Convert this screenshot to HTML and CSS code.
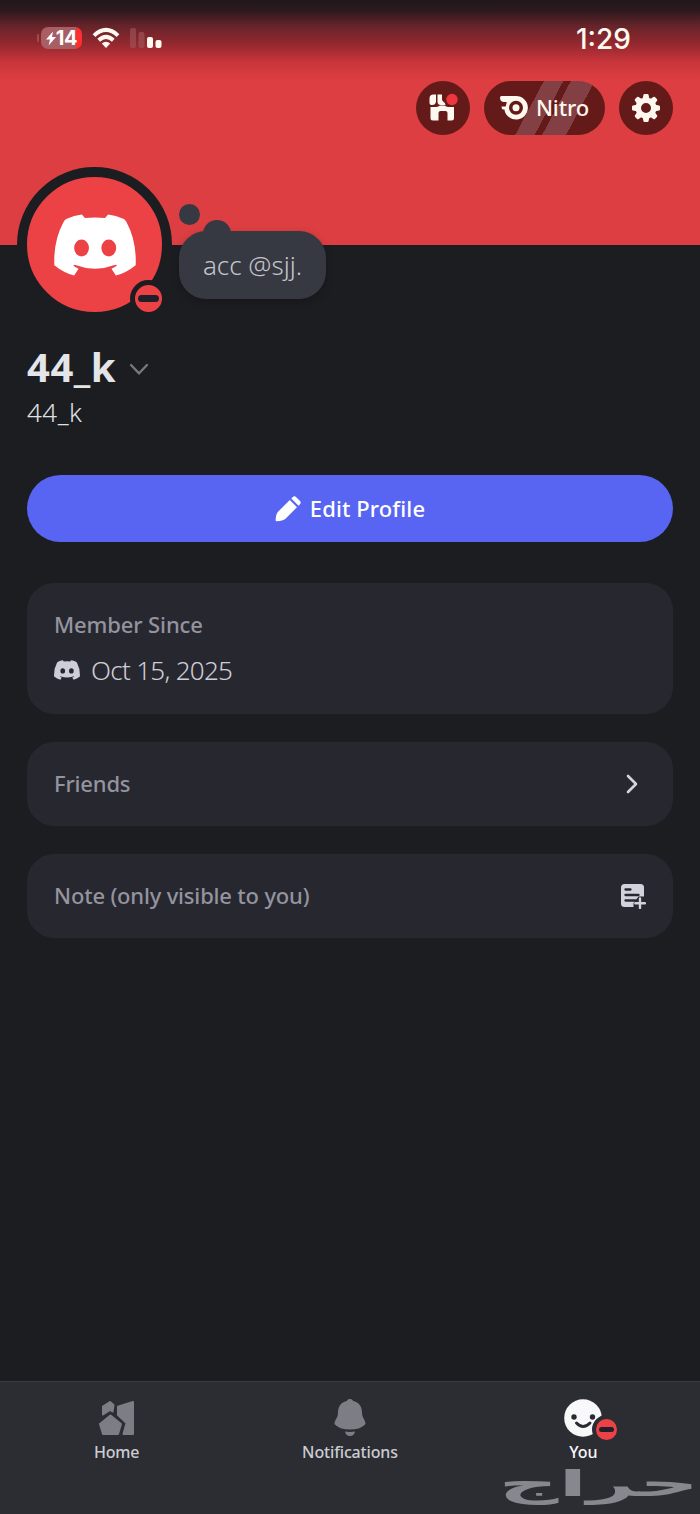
FILE: index.html
```html
<!DOCTYPE html>
<html lang="en">
<head>
<meta charset="utf-8">
<title>Profile</title>
<link rel="stylesheet" href="styles.css">
</head>
<body>
<svg class="defs" width="0" height="0" aria-hidden="true">
  <symbol id="discord" viewBox="0 0 244 184"><path fill="currentColor" fill-rule="evenodd" d="M83 1Q60 4 38 14 32 17 28 24-2 80 1 152 28 174 60 183L73 163Q64 159 57 152 62 150 66 152 122 173 178 152 184 150 188 152 180 159 171 163L184 183Q216 174 243 152 246 80 216 24 212 17 206 14 184 4 161 1L152 12Q122 9 92 12ZM82 76a22 25 0 1 1 0 50 22 25 0 0 1 0-50ZM163 76a22 25 0 1 1 0 50 22 25 0 0 1 0-50Z"/></symbol>
</svg>
<main class="screen">
  <header class="banner">
    <div class="status">
      <div class="signals">
        <span class="battery"><svg width="10" height="15" viewBox="0 0 10 14"><path fill="#fff" d="M7 0 0 8h4L2.6 14 10 5.6H6z"/></svg>14</span>
        <svg class="wifi" width="28" height="22" viewBox="0 0 28 22"><g fill="none" stroke="#fffaf0" stroke-width="4"><path d="M2 8.6Q14-2.8 26 8.6"/><path d="M6.7 13.3q7.3-6.7 14.6 0"/></g><path fill="#fffaf0" d="M9.8 16.400q4.200-3.400 8.400 0L14 21z"/></svg>
        <svg width="32" height="21" viewBox="0 0 32 21"><rect width="6" height="20" rx="2" fill="#a05357" opacity=".65"/><rect x="8.500" y="4" width="6" height="16" rx="2" fill="#a05357" opacity=".7"/><rect x="17" y="9" width="6" height="11" rx="2" fill="#fffaf0"/><rect x="25.500" y="12" width="6" height="8" rx="2" fill="#fffaf0"/></svg>
      </div>
      <time class="clock">1:29</time>
    </div>
    <nav class="actions">
      <button class="pill round" aria-label="Shop"><svg width="30" height="30" viewBox="0 0 30 30"><path fill="#fff8ee" d="M5.500 1.500H8V8.500a4 4 0 0 1-4 3.500H3a2 2 0 0 1-1.500-2V5.500a4 4 0 0 1 4-4ZM9.500 1.500H14V6c0 3 3.500 3 3.500 6H13a3.500 3.500 0 0 1-3.500-3.500ZM2.500 14H8c2.500 0 3-1.500 4.500-1.500H16c1.500 0 2 1.500 4.500 1.500H26V25a2.500 2.500 0 0 1-2.500 2.500H19.500V20a2 2 0 0 0-2-2h-5a2 2 0 0 0-2 2v7.500H5A2.500 2.500 0 0 1 2.500 25Z"/><circle cx="24" cy="6.500" r="5.700" fill="#ee363f"/></svg></button>
      <button class="pill nitro"><svg class="nitro-icon" width="28" height="24" viewBox="0 0 28 24"><path fill="#fff8ee" fill-rule="evenodd" d="M1.500 0H16a11.800 11.800 0 1 1-11.600 13.500H3.200Q1.500 13.200 1.500 10.500h4.200L6.800 6H3.500Q0 5.600 0 1.500 0 0 1.500 0ZM16 4.700a7 7 0 1 0 0 14 7 7 0 0 0 0-14Zm0 3.500a3.500 3.500 0 1 1 0 7 3.500 3.500 0 0 1 0-7Z"/></svg><span>Nitro</span></button>
      <button class="pill round" aria-label="Settings"><svg width="30" height="30" viewBox="-15 -15 30 30"><g fill="#fff8ee"><path fill-rule="evenodd" d="M0-10.500a10.500 10.500 0 1 1 0 21 10.500 10.500 0 0 1 0-21ZM0-5a5 5 0 1 0 0 10A5 5 0 0 0 0-5Z"/><g id="teeth"><path id="tooth" d="M-3.300-9.500-2.600-13Q-2.400-14-1.400-14h2.800Q2.400-14 2.600-13L3.300-9.500Z"/><use href="#tooth" transform="rotate(45)"/><use href="#tooth" transform="rotate(90)"/><use href="#tooth" transform="rotate(135)"/></g><use href="#teeth" transform="rotate(180)"/></g></svg></button>
    </nav>
  </header>
  <section class="identity">
    <div class="avatar"><svg width="82" height="62"><use href="#discord"/></svg><span class="dnd"></span></div>
    <div class="bubble"><i class="dot small"></i><i class="dot large"></i><span>acc @sjj.</span></div>
  </section>
  <section class="content">
    <h1 class="name"><span>44_k</span><svg width="20" height="13" viewBox="0 0 20 13"><path d="m2 2 8 8.300L18 2" fill="none" stroke="#777980" stroke-width="2.300" stroke-linecap="round"/></svg></h1>
    <p class="handle">44_k</p>
    <button class="edit"><svg width="26" height="26" viewBox="0 0 26 26"><path fill="#fff" d="m14.800 4 7.200 7.200L10.500 22.700Q8 25 1.500 25.200.600 25.200.600 24.300.700 18 3.300 15.500ZM16.300 2.500 17.600 1.200q1.800-1.800 3.600 0l3.600 3.600q1.800 1.800 0 3.600l-1.300 1.300Z"/></svg><span>Edit Profile</span></button>
    <article class="card since"><h2 class="label">Member Since</h2><p class="date"><svg width="26" height="20"><use href="#discord"/></svg><span>Oct 15, 2025</span></p></article>
    <article class="card row"><h2 class="label friends">Friends</h2><svg class="chevron" width="13" height="20" viewBox="0 0 13 20"><path d="m2 2 8 8-8 8" fill="none" stroke="#d5d4dd" stroke-width="2.600" stroke-linecap="round" stroke-linejoin="round"/></svg></article>
    <article class="card row"><h2 class="label note">Note (only visible to you)</h2><svg width="26" height="26" viewBox="0 0 26 26"><rect x="1" y="1" width="23" height="23" rx="3.500" fill="#d3d1db"/><path d="M24.500 13.500v12.500H13.500V20l5-6.500Z" fill="#272730"/><path d="M5.500 6.500h5M5.500 12h13M5.500 17.500h10" stroke="#272730" stroke-width="2.300" stroke-linecap="round"/><path d="M20 15.500v9.500M15.300 20.300H25" stroke="#d3d1db" stroke-width="2.400" stroke-linecap="round"/></svg></article>
  </section>
  <footer class="tabs">
    <a class="tab"><svg width="38" height="38" viewBox="0 0 38 38"><g fill="#7d7d86" stroke="#7d7d86" stroke-width="2" stroke-linejoin="round"><path d="M5 7.500 12 3l3.500 3-1 6.500L12 11 5 15.500ZM20 7.800 35 3v32H25.500L28.500 24 20 16ZM12.500 16.500 23 25 20 35H5L2 25Z"/></g></svg><span>Home</span></a>
    <a class="tab notifications"><svg width="38" height="38" viewBox="0 0 38 38"><path fill="#7d7d86" d="M19 0q2.500 0 3.200 2C29 3.300 31 9 31 13.500c0 6 3.500 7 3.500 11.500Q30 30.500 19 30.500T3.500 25C3.500 20.500 7 19.500 7 13.500 7 9 9 3.300 15.800 2 16.500 0 19 0 19 0ZM14 32.500q5 .8 10 0-1 4.500-5 4.500t-5-4.500Z"/></svg><span>Notifications</span></a>
    <a class="tab you"><span class="face"><svg width="38" height="38" viewBox="0 0 38 38"><circle cx="19" cy="19" r="18.800" fill="#f8f8fb"/><g fill="#2a2b31"><circle cx="10" cy="18" r="2.700"/><circle cx="28.500" cy="18" r="2.700"/></g><path d="M12.500 24q6.500 7 13.500 0" fill="none" stroke="#2a2b31" stroke-width="3" stroke-linecap="round"/></svg><i class="dnd mini"></i></span><span>You</span></a>
    <div class="watermark" lang="ar" dir="rtl"><span>حراج</span></div>
  </footer>
</main>
</body>
</html>
```
FILE: styles.css
```css
* { box-sizing: border-box; }
body { margin: 0; background: #1c1d21; font-family: "Noto Sans", "Open Sans", sans-serif; }
h1, h2, p { margin: 0; }
button { border: 0; padding: 0; font: inherit; color: inherit; }
svg { display: block; flex: none; }
.defs { position: absolute; }
.screen { width: 700px; height: 1514px; display: flex; flex-direction: column; overflow: hidden; background: #1c1d21; }

.banner { height: 245px; flex: none; background: linear-gradient(#1f181c 0, #2b191d 10px, #65242a 26px, #96292f 45px, #c8353b 62px, #dc3e41 80px); }
.status { height: 76px; display: flex; justify-content: space-between; padding: 0 69px 0 41px; align-items: center; }
.signals { display: flex; align-items: center; gap: 10px; }
.battery { position: relative; width: 41px; height: 22px; border-radius: 7px; display: flex; align-items: center; justify-content: center; color: #fff; font: 700 20px/22px "Inter", sans-serif; letter-spacing: -.3px; background: linear-gradient(90deg, #a85e62 0 35px, #fc3030 35px); }
.battery::before { content: ""; position: absolute; left: -4px; top: 7px; width: 2px; height: 8px; border-radius: 2px; background: #a4484d; }
.clock { color: #fffaf0; font: 500 28px/32px "Inter", sans-serif; padding-top: 2px; }
.actions { display: flex; justify-content: flex-end; gap: 14px; padding: 5px 27px 0 0; }
.pill { height: 54px; border-radius: 27px; background: #651a1a; display: flex; align-items: center; justify-content: center; color: #fff8ee; }
.round { width: 54px; }
.nitro { width: 121px; gap: 8px; font-size: 22px; font-weight: 500; background: linear-gradient(118deg, transparent 0 40%, #824044 40% 53%, transparent 53% 58%, #824044 58% 74%, transparent 74%), #651a1a; }
.nitro span { margin-top: -2px; letter-spacing: -.1px; }

.identity { display: flex; align-items: flex-start; gap: 7px; margin: -78px 0 0 17px; height: 156px; flex: none; }
.avatar { position: relative; width: 155px; height: 155px; border: 10px solid #1c1d21; border-radius: 50%; background: #ed4245; display: flex; align-items: center; justify-content: center; color: #fff; }
.dnd { position: absolute; right: -5px; bottom: -5px; width: 37px; height: 37px; border: 5px solid #1c1d21; border-radius: 50%; background: #ed4245; }
.dnd::after { content: ""; position: absolute; left: 3px; right: 3px; top: 50%; height: 7px; margin-top: -3.5px; border-radius: 4px; background: #20202a; }
.bubble { position: relative; margin-top: 64px; width: 147px; height: 68px; border-radius: 27px; background: #363941; color: #c3c5cc; display: flex; align-items: center; justify-content: center; font-size: 26px; font-weight: 350; box-shadow: 0 3px 8px #0003; }
.bubble span { margin-top: -1px; }
.dot { position: absolute; border-radius: 50%; background: #363941; }
.small { left: 0; top: -27px; width: 21px; height: 21px; }
.large { left: 24px; top: -11px; width: 28px; height: 28px; }

.content { flex: 1; padding: 16px 27px 0; }
.name { display: flex; align-items: center; gap: 13px; height: 54px; color: #e4e5e9; font-size: 40px; font-weight: 700; letter-spacing: .5px; }
.name svg { margin-top: 6px; }
.handle { height: 38px; line-height: 39px; color: #dfe0e4; font-size: 26px; font-weight: 350; letter-spacing: .5px; }
.edit { width: 100%; height: 67px; margin-top: 44px; border-radius: 34px; background: #5865f2; color: #fff; display: flex; align-items: center; justify-content: center; gap: 9px; font-size: 22px; font-weight: 550; }
.edit span { margin-top: -2px; letter-spacing: .1px; }
.card { background: #272730; border-radius: 27px; }
.since { height: 131px; margin-top: 41px; padding: 25px 27px; display: flex; flex-direction: column; gap: 13px; }
.row { height: 84px; margin-top: 28px; padding: 0 27px; display: flex; align-items: center; justify-content: space-between; }
.label { color: #93949e; font-size: 22px; line-height: 32px; font-weight: 500; letter-spacing: -.12px; }
.row .label { margin-top: -2px; letter-spacing: -.18px; }
.chevron { margin-right: 7px; }
.date { display: flex; align-items: center; gap: 11px; height: 34px; color: #cfced8; font-size: 26px; font-weight: 350; letter-spacing: -.7px; }

.tabs { position: relative; height: 133px; flex: none; border-top: 1px solid #3b3c43; background: #2c2d33; display: flex; }
.tab { flex: 1; display: flex; flex-direction: column; align-items: center; padding-top: 17px; gap: 3px; color: #cbccd2; font-size: 16px; line-height: 24px; font-weight: 500; letter-spacing: -.15px; }
.you { color: #f7f7fb; }
.face { position: relative; }
.mini { right: -19px; bottom: -7px; width: 29px; height: 29px; border: 4px solid #2c2d33; }
.mini::after { left: 3px; right: 3px; height: 5px; margin-top: -2.5px; }
.watermark { position: absolute; left: 501px; top: 76px; width: 194px; height: 50px; color: #85888e; }
.watermark span { display: block; width: 76px; font: 700 34px/50px "DejaVu Sans", sans-serif; transform: translateX(4px) scale(2.45, 1.06); transform-origin: right center; white-space: nowrap; }
```
